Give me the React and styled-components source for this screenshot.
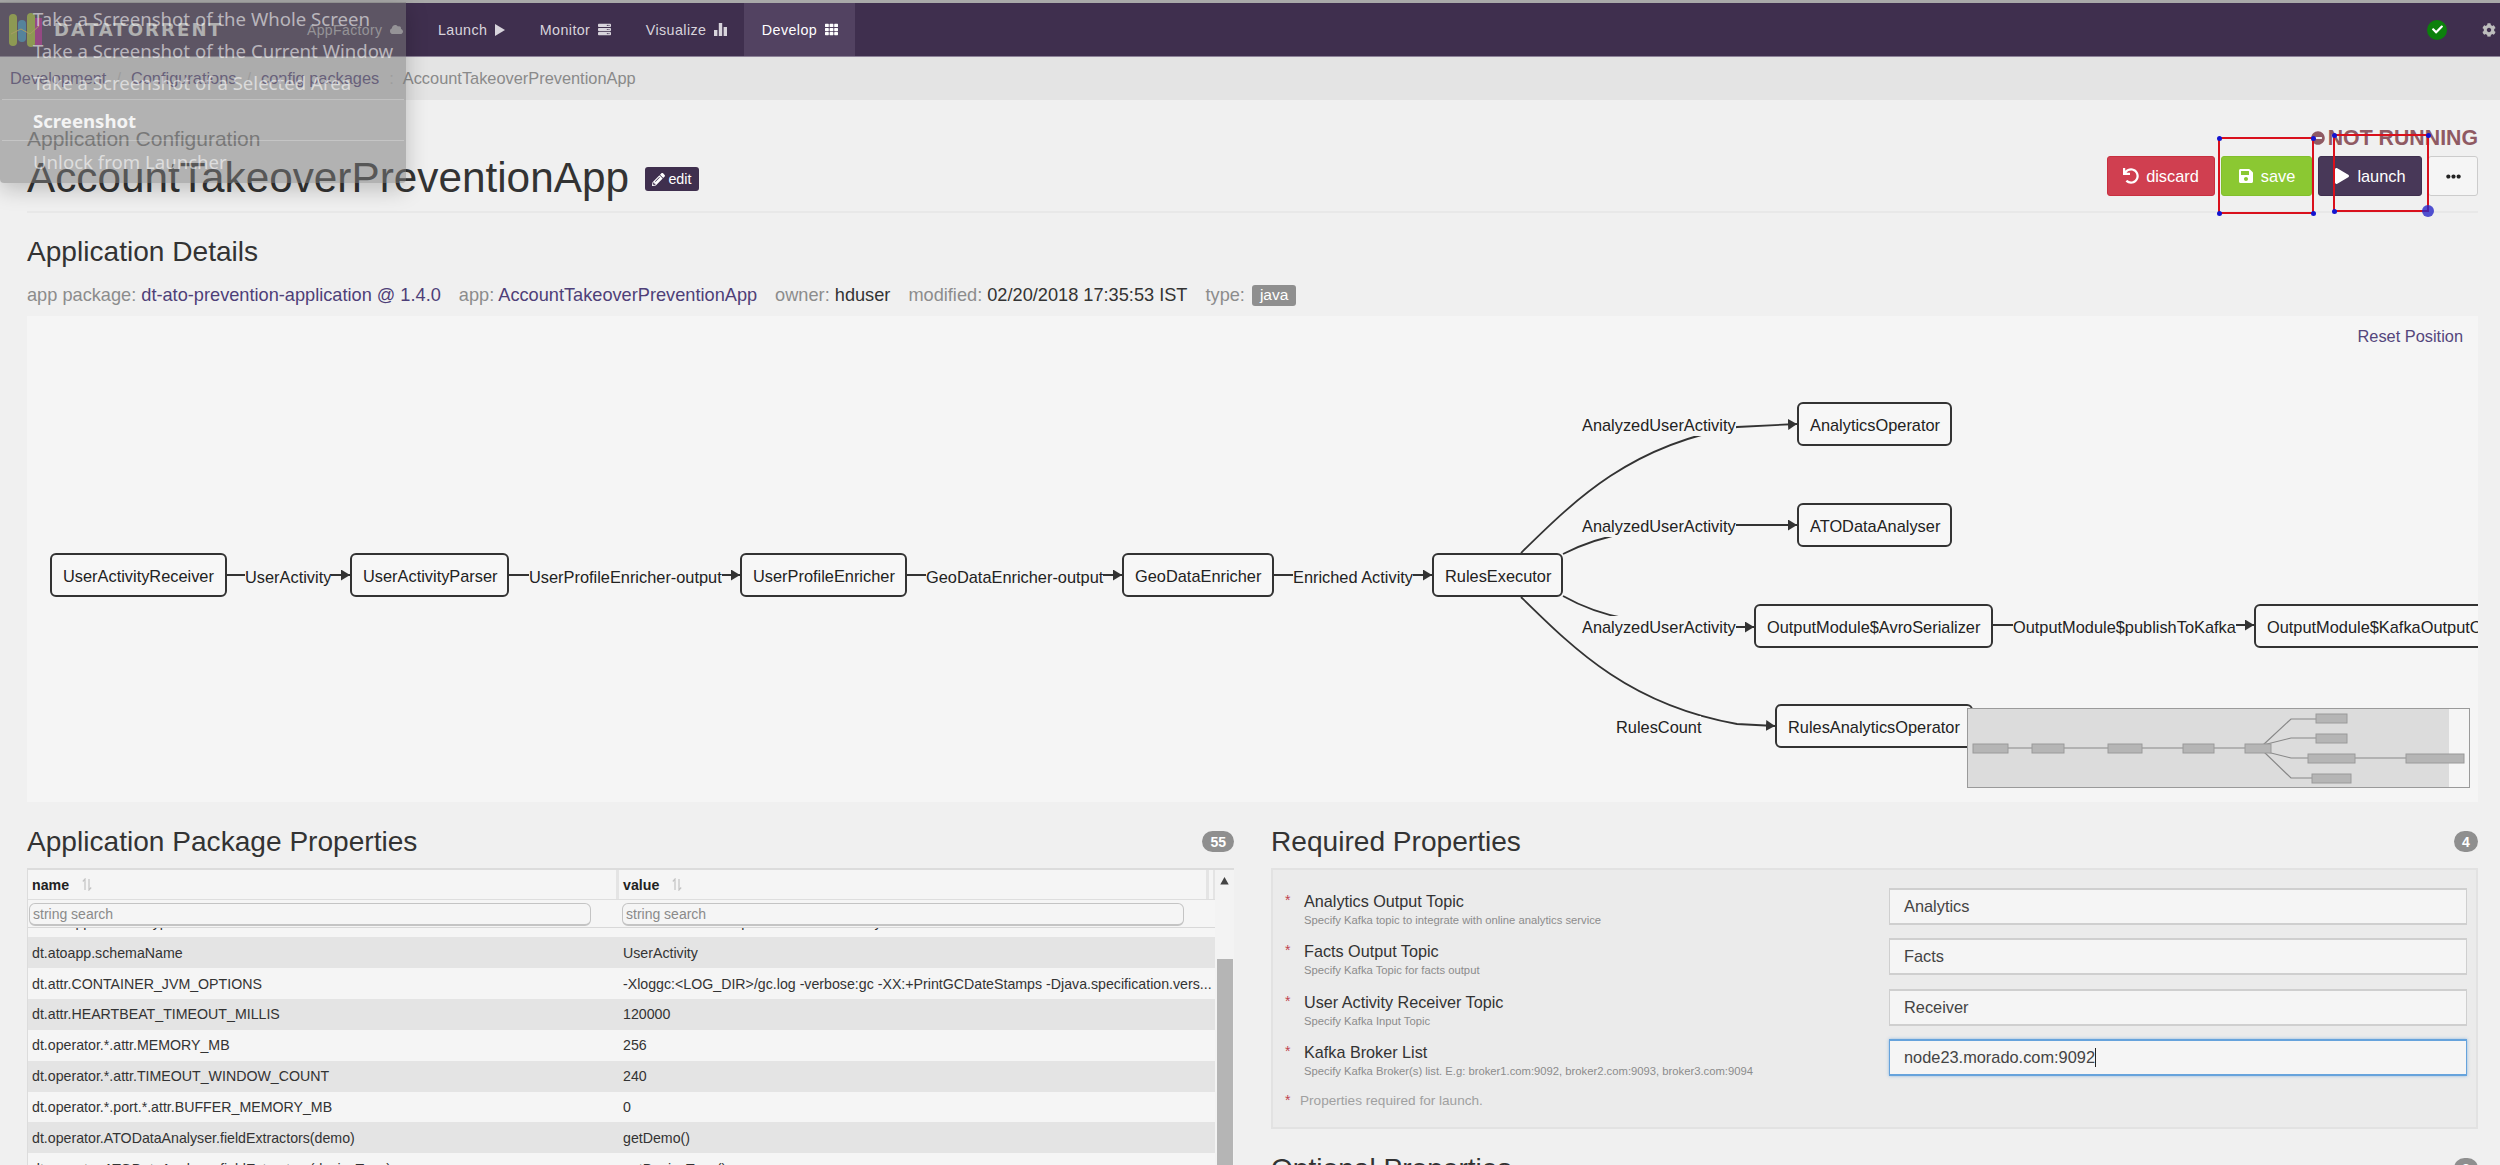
import React from 'react';
import styled, { createGlobalStyle } from 'styled-components';
import { FaCloud, FaServer, FaTh, FaPencilAlt, FaUndo, FaSave, FaPlay, FaEllipsisH, FaCog, FaCheck, FaMinusCircle } from 'react-icons/fa';

const GlobalStyle = createGlobalStyle`
  html, body {
    margin: 0;
    height: 100%;
    overflow: hidden;
    background: #f0f0f0;
    font-family: "Liberation Sans", Arial, sans-serif;
    color: #333;
  }
  * { box-sizing: border-box; }
`;

const Root = styled.div`
  position: relative;
  width: 2500px;
  height: 1165px;
  overflow: hidden;
`;

/* ---------- top bar ---------- */
const Nav = styled.nav`
  height: 57px;
  display: flex;
  align-items: stretch;
  background: #3f2f4e;
  border-top: 3px solid #a9a9a9;
  border-bottom: 1px solid #8d8298;
  padding-right: 4px;
`;
const Brand = styled.div`
  width: 420.5px;
  display: flex;
  align-items: center;
  padding-left: 9px;
`;
const BrandName = styled.span`
  margin-left: 11px;
  font-family: "DejaVu Sans", sans-serif;
  font-weight: 700;
  font-size: 18px;
  letter-spacing: 2.1px;
  color: #ececec;
`;
const AppFactory = styled.span`
  margin-left: auto;
  margin-right: 18px;
  display: flex;
  align-items: center;
  gap: 7px;
  font-size: 14px;
  letter-spacing: 0.4px;
  color: #b4b0b8;
`;
const NavItem = styled.a`
  display: flex;
  align-items: center;
  gap: 7.5px;
  padding: 0 17.5px;
  font-size: 14.3px;
  letter-spacing: 0.4px;
  color: ${p => (p.$active ? '#fff' : '#d8d4dc')};
  background: ${p => (p.$active ? '#524261' : 'transparent')};
`;
const NavRight = styled.div`
  margin-left: auto;
  display: flex;
  align-items: center;
  gap: 35px;
`;
const StatusDot = styled.span`
  width: 20px;
  height: 20px;
  border-radius: 50%;
  background: #0c800c;
  color: #fff;
  display: flex;
  align-items: center;
  justify-content: center;
  font-size: 11px;
`;
const Gear = styled.span`
  display: flex;
  color: #bdbdbd;
  font-size: 14px;
`;

/* ---------- breadcrumb ---------- */
const Breadcrumb = styled.div`
  height: 43px;
  display: flex;
  align-items: center;
  padding-left: 10px;
  background: #e4e4e4;
  font-size: 16.38px;
  color: #8a8a8a;
`;
const Crumb = styled.a`
  color: #54467c;
`;
const CrumbSep = styled.span`
  margin: 0 10px;
  color: #c4c4c4;
`;
const CrumbLast = styled.span`
  margin-left: -1px;
`;

/* ---------- page ---------- */
const Page = styled.div`
  padding: 0 22px 0 27px;
`;
const PageHeader = styled.header`
  height: 113px;
  display: flex;
  align-items: flex-end;
  justify-content: space-between;
  border-bottom: 2px solid #e8e8e8;
`;
const TitleBlock = styled.div`
  padding-bottom: 8px;
`;
const Eyebrow = styled.div`
  font-size: 21px;
  line-height: 28px;
  color: #777;
`;
const TitleRow = styled.div`
  display: flex;
  align-items: center;
  gap: 16px;
  height: 50px;
`;
const Title = styled.h1`
  margin: 0;
  font-size: 42.3px;
  font-weight: 400;
  line-height: 50px;
  color: #333;
`;
const EditLink = styled.a`
  width: 54px;
  height: 24px;
  margin-top: 2px;
  display: flex;
  align-items: center;
  justify-content: center;
  gap: 3px;
  background: #3f2f4e;
  border-radius: 3px;
  color: #fff;
  font-size: 14.3px;
`;
const Actions = styled.div`
  display: flex;
  flex-direction: column;
  align-items: flex-end;
  padding-bottom: 15px;
`;
const RunState = styled.div`
  height: 26px;
  margin-bottom: 5px;
  margin-top: -1px;
  display: flex;
  align-items: center;
  gap: 3px;
  font-size: 21.3px;
  font-weight: 700;
  color: #8f5a63;
`;
const ButtonRow = styled.div`
  display: flex;
  gap: 6px;
`;
const Button = styled.button`
  width: ${p => p.$w}px;
  height: 40px;
  padding: 0;
  display: flex;
  align-items: center;
  justify-content: center;
  gap: 7px;
  border: 1px solid ${p => p.$border};
  border-radius: 3px;
  background: ${p => p.$bg};
  color: ${p => p.$color || '#fff'};
  font-family: inherit;
  font-size: 16.38px;
`;

const SectionTitle = styled.h2`
  margin: 0;
  font-size: 28.1px;
  font-weight: 400;
  line-height: 34px;
  color: #333;
`;
const DetailsTitle = styled(SectionTitle)`
  margin-top: 22px;
`;
const Meta = styled.div`
  margin: 13px 0 8px;
  height: 26px;
  display: flex;
  align-items: center;
  gap: 18px;
  font-size: 18.2px;
  color: #8c8c8c;
`;
const MetaValue = styled.span`
  color: ${p => (p.$link ? '#4e3f78' : '#333')};
`;
const TypeLabel = styled.span`
  margin-left: -11px;
  padding: 0 8px;
  height: 21px;
  display: flex;
  align-items: center;
  background: #8f8f8f;
  border-radius: 3px;
  color: #fff;
  font-size: 15.5px;
`;

/* ---------- graph ---------- */
const Graph = styled.section`
  position: relative;
  height: 486px;
  overflow: hidden;
  background: #f5f5f5;
`;
const ResetLink = styled.a`
  position: absolute;
  top: 10px;
  right: 15px;
  font-size: 16.38px;
  line-height: 20px;
  color: #54467c;
`;
const Edges = styled.svg`
  position: absolute;
  inset: 0;
`;
const Node = styled.div`
  position: absolute;
  left: ${p => p.$x - 27}px;
  top: ${p => p.$y - 316}px;
  width: ${p => p.$w}px;
  height: 44px;
  padding: 2px 0 0 11px;
  display: flex;
  align-items: center;
  border: 2px solid #333;
  border-radius: 6px;
  background: #f7f7f7;
  font-size: 16.38px;
  white-space: nowrap;
  color: #222;
`;
const EdgeLabel = styled.div`
  position: absolute;
  left: ${p => p.$x - 27}px;
  top: ${p => p.$y - 316 - 11}px;
  height: 22px;
  line-height: 22px;
  background: #f5f5f5;
  font-size: 16.38px;
  white-space: nowrap;
  color: #222;
`;
const Minimap = styled.svg`
  position: absolute;
  left: ${1967 - 27}px;
  top: ${708 - 316}px;
  width: 503px;
  height: 80px;
`;

/* ---------- lower columns ---------- */
const Columns = styled.div`
  margin-top: 23px;
  display: grid;
  grid-template-columns: 1207px 1207px;
  column-gap: 37px;
`;
const SectionHead = styled.div`
  height: 34px;
  display: flex;
  align-items: center;
  justify-content: space-between;
  margin-bottom: 9px;
`;
const OptionalHead = styled(SectionHead)`
  margin-top: 23px;
`;
const CountBadge = styled.span`
  min-width: 24px;
  height: 21px;
  padding: 0 8px;
  margin-top: -1px;
  display: flex;
  align-items: center;
  justify-content: center;
  border-radius: 11px;
  background: #8f8f8f;
  color: #fff;
  font-size: 14px;
  font-weight: 700;
`;

const TableFrame = styled.div`
  display: flex;
  border-top: 2px solid #dcdcdc;
  border-left: 1px solid #dcdcdc;
  height: 297px;
  overflow: hidden;
  background: #f5f5f5;
`;
const TableMain = styled.div`
  width: 1187px;
`;
const HeadRow = styled.div`
  height: 30px;
  display: grid;
  grid-template-columns: 591px 590px 6px;
  border-bottom: 1px solid #dedede;
`;
const HeadCell = styled.div`
  display: flex;
  align-items: center;
  gap: 13px;
  padding-left: 4px;
  border-right: 3px solid #e4e4e4;
  font-size: 14.2px;
  font-weight: 700;
  color: #222;
`;
const FilterRow = styled.div`
  height: 28px;
  display: grid;
  grid-template-columns: 591px 1fr;
  align-items: start;
  padding-top: 3px;
  border-bottom: 1px solid #d8d8d8;
`;
const FilterInput = styled.input`
  width: ${p => p.$w}px;
  height: 23px;
  margin-left: ${p => p.$ml}px;
  padding: 0 3px;
  border: 1px solid #c4c4c4;
  border-bottom-width: 2px;
  border-radius: 6px;
  background: #f5f5f5;
  font-family: inherit;
  font-size: 14px;
  outline: none;
  &::placeholder { color: #8a8a8a; opacity: 1; }
`;
const Rows = styled.div`
  overflow: hidden;
`;
const Row = styled.div`
  height: 30.85px;
  display: grid;
  grid-template-columns: 591px 1fr;
  align-items: center;
  margin-top: ${p => (p.$clip ? '-21.5px' : 0)};
  background: ${p => (p.$dark ? '#e4e4e4' : '#f5f5f5')};
  font-size: 14.2px;
  color: #333;
`;
const Cell = styled.div`
  padding-left: 4px;
  white-space: nowrap;
`;
const ScrollTrack = styled.div`
  width: 19px;
  display: flex;
  flex-direction: column;
  align-items: center;
  padding-top: 7px;
  background: #f3f3f3;
`;
const ScrollThumb = styled.div`
  width: 16px;
  height: 220px;
  margin-top: 74px;
  background: #b5b5b5;
`;

const RequiredPanel = styled.div`
  padding: 18px 9px 16px 12px;
  border: 2px solid #e2e2e2;
  background: #ebebeb;
`;
const FieldRow = styled.div`
  height: 50.3px;
  display: flex;
  justify-content: space-between;
`;
const FieldLabel = styled.div`
  display: flex;
  padding-top: 2px;
`;
const Star = styled.span`
  width: ${p => p.$w || 19}px;
  font-size: 14px;
  line-height: 20px;
  color: #c0444f;
`;
const LabelName = styled.div`
  font-size: 16.2px;
  line-height: 22px;
  margin-bottom: 1px;
  color: #333;
`;
const LabelHelp = styled.div`
  font-size: 11.26px;
  line-height: 15px;
  color: #8c8c8c;
`;
const FieldBox = styled.div`
  width: 578px;
  height: 37px;
  padding-left: 14px;
  display: flex;
  align-items: center;
  border: 1px solid ${p => (p.$focused ? '#66a3dc' : '#cfcfcf')};
  border-top-width: 2px;
  border-bottom-width: 2px;
  background: #f5f5f5;
  box-shadow: ${p => (p.$focused ? '0 0 3px rgba(102,163,220,.7)' : 'none')};
  font-size: 16.38px;
  color: #444;
`;
const Caret = styled.span`
  width: 1px;
  height: 19px;
  background: #222;
`;
const RequiredNote = styled.div`
  display: flex;
  height: 22px;
  align-items: center;
  font-size: 13.6px;
  color: #a0a0a0;
`;

/* ---------- overlays from the screenshot ---------- */
const ShotMenu = styled.div`
  position: absolute;
  left: 0;
  top: 2px;
  width: 406px;
  height: 181px;
  background: rgba(120, 120, 120, 0.52);
  border-radius: 0 0 4px 4px;
  box-shadow: 0 6px 22px rgba(0, 0, 0, 0.22);
  font-family: "Noto Sans", sans-serif;
  font-size: 18.6px;
  color: rgba(255, 255, 255, 0.58);
`;
const ShotItem = styled.div`
  height: ${p => p.$h}px;
  padding-left: 33px;
  display: flex;
  align-items: center;
  white-space: nowrap;
  font-weight: ${p => (p.$bold ? 700 : 400)};
  color: ${p => (p.$bold ? '#f4f4f4' : 'inherit')};
`;
const ShotRule = styled.div`
  height: 1px;
  margin: 0 2px;
  background: rgba(255, 255, 255, 0.25);
`;
const MarkRect = styled.div`
  position: absolute;
  left: ${p => p.$x}px;
  top: ${p => p.$y}px;
  width: ${p => p.$w}px;
  height: ${p => p.$h}px;
  border: 2px solid #d9101c;
`;
const MarkHandle = styled.span`
  position: absolute;
  ${p => (p.$right ? 'right' : 'left')}: ${p => -1 - (p.$size / 2)}px;
  ${p => (p.$bottom ? 'bottom' : 'top')}: ${p => -1 - (p.$size / 2)}px;
  width: ${p => p.$size}px;
  height: ${p => p.$size}px;
  border-radius: 50%;
  background: ${p => (p.$size > 6 ? 'rgba(40,40,200,.8)' : '#1414d0')};
`;

const LogoMark = () => (
  <svg width="34" height="36" viewBox="0 0 34 36">
    <rect x="0" y="2" width="8" height="32" rx="4" fill="#a4bd2a" />
    <rect x="9" y="8" width="8" height="22" rx="4" fill="#2f8fc0" />
    <rect x="18" y="1" width="8" height="34" rx="4" fill="#a4bd2a" />
    <rect x="26" y="6" width="7" height="27" fill="#b5168f" />
    <polyline points="2,22 12,17 21,22 30,14" fill="none" stroke="#d8c24a" strokeWidth="1" />
  </svg>
);
const PlayGlyph = () => (
  <svg width="10" height="12" viewBox="0 0 10 12"><path d="M0 0 L10 6 L0 12z" fill="#d8d4dc" /></svg>
);
const BarsGlyph = () => (
  <svg width="13" height="13" viewBox="0 0 13 13" fill="#d8d4dc">
    <rect x="0" y="7" width="3.4" height="6" /><rect x="4.8" y="0" width="3.4" height="13" /><rect x="9.6" y="4" width="3.4" height="9" />
  </svg>
);
const SortGlyph = () => (
  <svg width="10" height="13" viewBox="0 0 10 13" fill="none" stroke="#c4c4c4" strokeWidth="1.2">
    <path d="M3 12 V1 L0.8 3.5" /><path d="M7 1 V12 L9.2 9.5" />
  </svg>
);

const nodes = [
  { name: 'UserActivityReceiver', x: 50, y: 553, w: 177 },
  { name: 'UserActivityParser', x: 350, y: 553, w: 159 },
  { name: 'UserProfileEnricher', x: 740, y: 553, w: 167 },
  { name: 'GeoDataEnricher', x: 1122, y: 553, w: 152 },
  { name: 'RulesExecutor', x: 1432, y: 553, w: 131 },
  { name: 'AnalyticsOperator', x: 1797, y: 402, w: 155 },
  { name: 'ATODataAnalyser', x: 1797, y: 503, w: 155 },
  { name: 'OutputModule$AvroSerializer', x: 1754, y: 604, w: 239 },
  { name: 'OutputModule$KafkaOutputOperator', x: 2254, y: 604, w: 300 },
  { name: 'RulesAnalyticsOperator', x: 1775, y: 704, w: 198 },
];
const labels = [
  { text: 'UserActivity', x: 245, y: 577 },
  { text: 'UserProfileEnricher-output', x: 529, y: 577 },
  { text: 'GeoDataEnricher-output', x: 926, y: 577 },
  { text: 'Enriched Activity', x: 1293, y: 577 },
  { text: 'AnalyzedUserActivity', x: 1582, y: 425 },
  { text: 'AnalyzedUserActivity', x: 1582, y: 526 },
  { text: 'AnalyzedUserActivity', x: 1582, y: 627 },
  { text: 'OutputModule$publishToKafka', x: 2013, y: 627 },
  { text: 'RulesCount', x: 1616, y: 727 },
];
const edges = [
  'M227 575 L350 575',
  'M509 575 L740 575',
  'M907 575 L1122 575',
  'M1274 575 L1432 575',
  'M1521 553 C1575 500 1630 445 1737 427 L1797 424',
  'M1563 554 C1600 535 1640 526 1737 525 L1797 525',
  'M1563 596 C1600 617 1640 626 1737 627 L1754 627',
  'M1993 625 L2254 625',
  'M1521 597 C1575 650 1630 705 1737 724 L1775 726',
];

const miniNodes = [
  [6, 36, 35, 9], [65, 36, 32, 9], [141, 36, 34, 9], [216, 36, 31, 9], [278, 36, 26, 9],
  [349, 6, 31, 9], [349, 26, 31, 9], [341, 46, 47, 9], [439, 46, 58, 9], [345, 66, 39, 9],
];
const miniEdges = [
  'M41 40 H278', 'M296 37 L324 11 H349', 'M296 37 L324 30 H349',
  'M296 43 L324 50 H341', 'M388 50 H439', 'M296 43 L324 70 H345',
];

const appProps = [
  ['dt.atoapp.schemaType', 'com.datatorrent.cep.schema.UserActivity', true],
  ['dt.atoapp.schemaName', 'UserActivity'],
  ['dt.attr.CONTAINER_JVM_OPTIONS', '-Xloggc:<LOG_DIR>/gc.log -verbose:gc -XX:+PrintGCDateStamps -Djava.specification.vers...'],
  ['dt.attr.HEARTBEAT_TIMEOUT_MILLIS', '120000'],
  ['dt.operator.*.attr.MEMORY_MB', '256'],
  ['dt.operator.*.attr.TIMEOUT_WINDOW_COUNT', '240'],
  ['dt.operator.*.port.*.attr.BUFFER_MEMORY_MB', '0'],
  ['dt.operator.ATODataAnalyser.fieldExtractors(demo)', 'getDemo()'],
  ['dt.operator.ATODataAnalyser.fieldExtractors(deviceType)', 'getDeviceType()'],
];

const requiredProps = [
  { name: 'Analytics Output Topic', help: 'Specify Kafka topic to integrate with online analytics service', value: 'Analytics' },
  { name: 'Facts Output Topic', help: 'Specify Kafka Topic for facts output', value: 'Facts' },
  { name: 'User Activity Receiver Topic', help: 'Specify Kafka Input Topic', value: 'Receiver' },
  { name: 'Kafka Broker List', help: 'Specify Kafka Broker(s) list. E.g: broker1.com:9092, broker2.com:9093, broker3.com:9094', value: 'node23.morado.com:9092', focused: true },
];

const Mark = ({ x, y, w, h, big }) => (
  <MarkRect $x={x} $y={y} $w={w} $h={h}>
    <MarkHandle $size={5} />
    <MarkHandle $size={5} $right />
    <MarkHandle $size={5} $bottom />
    <MarkHandle $size={big ? 12 : 5} $right $bottom />
  </MarkRect>
);

export default function App() {
  return (
    <Root>
      <GlobalStyle />
      <Nav>
        <Brand>
          <LogoMark />
          <BrandName>DATATORRENT</BrandName>
          <AppFactory>AppFactory <FaCloud size={13} /></AppFactory>
        </Brand>
        <NavItem>Launch <PlayGlyph /></NavItem>
        <NavItem>Monitor <FaServer size={13} /></NavItem>
        <NavItem>Visualize <BarsGlyph /></NavItem>
        <NavItem $active>Develop <FaTh size={13} /></NavItem>
        <NavRight>
          <StatusDot><FaCheck /></StatusDot>
          <Gear><FaCog /></Gear>
        </NavRight>
      </Nav>
      <Breadcrumb>
        <Crumb>Development</Crumb>
        <CrumbSep>/</CrumbSep>
        <Crumb>Configurations</Crumb>
        <CrumbSep>/</CrumbSep>
        <Crumb>config packages</Crumb>
        <CrumbSep>:</CrumbSep>
        <CrumbLast>AccountTakeoverPreventionApp</CrumbLast>
      </Breadcrumb>

      <Page>
        <PageHeader>
          <TitleBlock>
            <Eyebrow>Application Configuration</Eyebrow>
            <TitleRow>
              <Title>AccountTakeoverPreventionApp</Title>
              <EditLink><FaPencilAlt size={13} /> edit</EditLink>
            </TitleRow>
          </TitleBlock>
          <Actions>
            <RunState><FaMinusCircle size={14} /> NOT RUNNING</RunState>
            <ButtonRow>
              <Button $w={108} $bg="#d03f50" $border="#c9303f"><FaUndo size={16} /> discard</Button>
              <Button $w={91} $bg="#8bc832" $border="#82bf2c"><FaSave size={16} /> save</Button>
              <Button $w={104} $bg="#483858" $border="#3f2f4e"><FaPlay size={16} /> launch</Button>
              <Button $w={50} $bg="#f5f5f5" $border="#ccc" $color="#222"><FaEllipsisH size={15} /></Button>
            </ButtonRow>
          </Actions>
        </PageHeader>

        <DetailsTitle>Application Details</DetailsTitle>
        <Meta>
          <span>app package: <MetaValue $link>dt-ato-prevention-application @ 1.4.0</MetaValue></span>
          <span>app: <MetaValue $link>AccountTakeoverPreventionApp</MetaValue></span>
          <span>owner: <MetaValue>hduser</MetaValue></span>
          <span>modified: <MetaValue>02/20/2018 17:35:53 IST</MetaValue></span>
          <span>type:</span>
          <TypeLabel>java</TypeLabel>
        </Meta>

        <Graph>
          <Edges width="2451" height="486" viewBox="27 316 2451 486">
            <defs>
              <marker id="arrow" markerUnits="userSpaceOnUse" markerWidth="9" markerHeight="11" refX="9" refY="5.5" orient="auto">
                <path d="M0 0 L9 5.5 L0 11z" fill="#333" />
              </marker>
            </defs>
            {edges.map(d => (
              <path key={d} d={d} fill="none" stroke="#333" strokeWidth="1.8" markerEnd="url(#arrow)" />
            ))}
          </Edges>
          {labels.map(l => (
            <EdgeLabel key={l.text + l.y} $x={l.x} $y={l.y}>{l.text}</EdgeLabel>
          ))}
          {nodes.map(n => (
            <Node key={n.name} $x={n.x} $y={n.y} $w={n.w}>{n.name}</Node>
          ))}
          <ResetLink>Reset Position</ResetLink>
          <Minimap viewBox="0 0 503 80">
            <rect x="0.5" y="0.5" width="502" height="79" fill="#f5f5f5" stroke="#9a9a9a" />
            <rect x="1" y="1" width="481" height="78" fill="#dcdcdc" />
            {miniEdges.map(d => <path key={d} d={d} fill="none" stroke="#888" strokeWidth="1.2" />)}
            {miniNodes.map(([x, y, w, h]) => (
              <rect key={`${x}-${y}`} x={x} y={y} width={w} height={h} fill="#b5b5b5" stroke="#9a9a9a" />
            ))}
          </Minimap>
        </Graph>

        <Columns>
          <div>
            <SectionHead>
              <SectionTitle>Application Package Properties</SectionTitle>
              <CountBadge>55</CountBadge>
            </SectionHead>
            <TableFrame>
              <TableMain>
                <HeadRow>
                  <HeadCell>name <SortGlyph /></HeadCell>
                  <HeadCell>value <SortGlyph /></HeadCell>
                  <HeadCell />
                </HeadRow>
                <FilterRow>
                  <FilterInput $w={562} $ml={1} placeholder="string search" />
                  <FilterInput $w={562} $ml={3} placeholder="string search" />
                </FilterRow>
                <Rows>
                  {appProps.map(([name, value, clip], i) => (
                    <Row key={name} $clip={clip} $dark={i % 2 === 1}>
                      <Cell>{name}</Cell>
                      <Cell>{value}</Cell>
                    </Row>
                  ))}
                </Rows>
              </TableMain>
              <ScrollTrack>
                <svg width="9" height="8" viewBox="0 0 9 8"><path d="M4.5 0 L9 8 L0 8z" fill="#444" /></svg>
                <ScrollThumb />
              </ScrollTrack>
            </TableFrame>
          </div>

          <div>
            <SectionHead>
              <SectionTitle>Required Properties</SectionTitle>
              <CountBadge>4</CountBadge>
            </SectionHead>
            <RequiredPanel>
              {requiredProps.map(f => (
                <FieldRow key={f.name}>
                  <FieldLabel>
                    <Star>*</Star>
                    <div>
                      <LabelName>{f.name}</LabelName>
                      <LabelHelp>{f.help}</LabelHelp>
                    </div>
                  </FieldLabel>
                  <FieldBox $focused={f.focused}>
                    {f.value}
                    {f.focused && <Caret />}
                  </FieldBox>
                </FieldRow>
              ))}
              <RequiredNote><Star $w={15}>*</Star>Properties required for launch.</RequiredNote>
            </RequiredPanel>
            <OptionalHead>
              <SectionTitle>Optional Properties</SectionTitle>
              <CountBadge>8</CountBadge>
            </OptionalHead>
          </div>
        </Columns>
      </Page>

      <ShotMenu>
        <ShotItem $h={32}>Take a Screenshot of the Whole Screen</ShotItem>
        <ShotItem $h={32}>Take a Screenshot of the Current Window</ShotItem>
        <ShotItem $h={33}>Take a Screenshot of a Selected Area</ShotItem>
        <ShotRule />
        <ShotItem $h={40} $bold>Screenshot</ShotItem>
        <ShotRule />
        <ShotItem $h={40}>Unlock from Launcher</ShotItem>
      </ShotMenu>
      <Mark x={2218} y={137} w={96} h={77} />
      <Mark x={2333} y={134} w={96} h={78} big />
    </Root>
  );
}
